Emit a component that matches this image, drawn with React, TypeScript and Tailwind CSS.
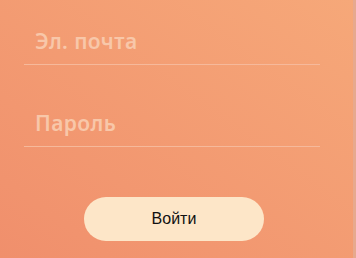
export default function App() {
  return (
    <div className="relative h-[258px] w-[356px] overflow-hidden bg-gradient-to-tr from-[#f08f6c] to-[#f6a879] font-['Noto_Sans',sans-serif]">
      {/* Fields */}
      <div className="ml-6 w-[296px] pt-[27px]">
        <div className="flex h-[38px] items-end border-b border-[#f6b99b] pb-[12px] pl-[11px]">
          <span className="text-[21px] font-semibold leading-none tracking-[0.4px] text-[#f8c7a9]">Эл. почта</span>
        </div>
        <div className="mt-[44px] flex h-[38px] items-end border-b border-[#f6b99b] pb-[12px] pl-[11px]">
          <span className="text-[21px] font-semibold leading-none tracking-[0.4px] text-[#f8c7a9]">Пароль</span>
        </div>
      </div>

      {/* Submit */}
      <div className="mt-[50px] pl-[84px]">
        <button className="flex h-[44px] w-[180px] items-center justify-center rounded-full bg-[#fde6c8] font-['Liberation_Sans',sans-serif] text-[16px] text-[#111111]">
          Войти
        </button>
      </div>

      <div className="absolute right-0 top-0 h-full w-[3px] bg-[#e7a98e]" />
    </div>
  );
}
